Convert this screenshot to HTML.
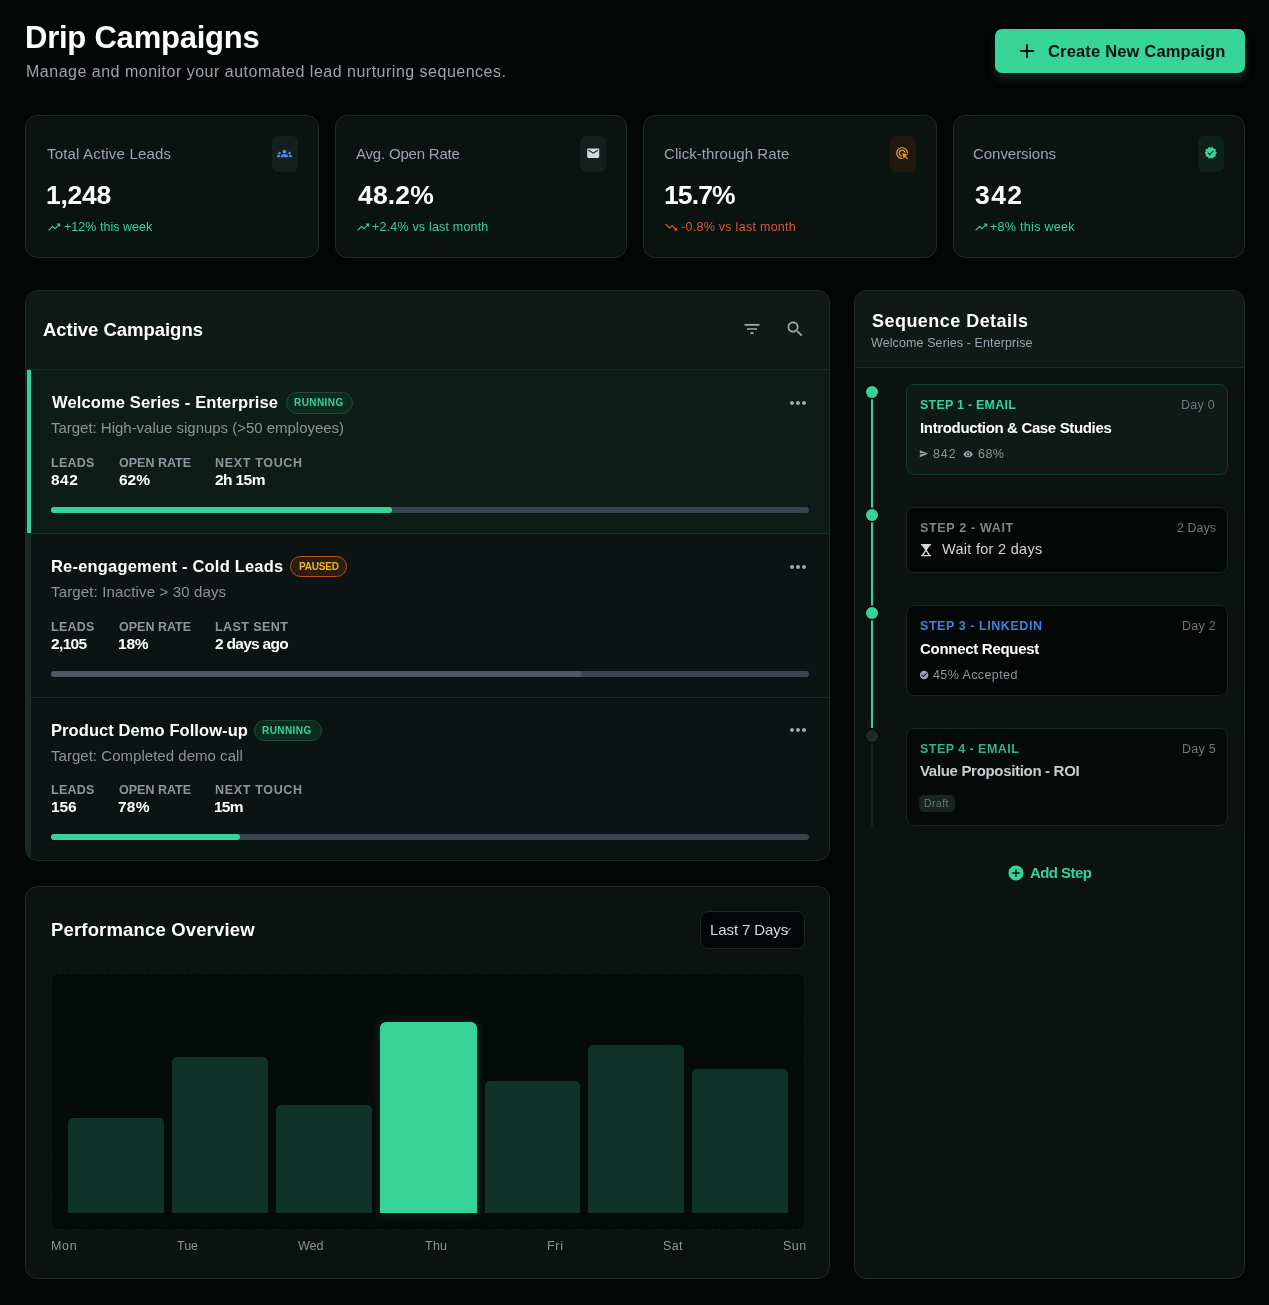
<!DOCTYPE html>
<html><head><meta charset="utf-8"><title>Drip Campaigns</title>
<style>
html,body{margin:0;padding:0;}
body{width:1269px;height:1305px;background:#020605;position:relative;overflow:hidden;font-family:"Liberation Sans",sans-serif;}
.t{position:absolute;white-space:nowrap;font-family:"Liberation Sans",sans-serif;will-change:transform;}
.b{position:absolute;box-sizing:border-box;}
svg{position:absolute;overflow:visible;}
</style></head><body>
<!-- button -->
<div class="b" style="left:995px;top:29px;width:250px;height:44px;background:#37d49a;border-radius:7px;box-shadow:0 6px 9px rgba(45,100,80,0.32);"></div>
<svg style="left:1019px;top:43px" width="16" height="16" viewBox="0 0 16 16"><path d="M8 1.2V14.8M1.2 8H14.8" stroke="#04100b" stroke-width="2" fill="none"/></svg>

<!-- stat cards -->
<div class="b" style="left:25px;top:115px;width:294px;height:143px;background:#0b1311;border:1px solid #1b2c25;border-radius:12px;"></div>
<div class="b" style="left:335px;top:115px;width:292px;height:143px;background:#0b1311;border:1px solid #1b2c25;border-radius:12px;"></div>
<div class="b" style="left:643px;top:115px;width:294px;height:143px;background:#0b1311;border:1px solid #1b2c25;border-radius:12px;"></div>
<div class="b" style="left:953px;top:115px;width:292px;height:143px;background:#0b1311;border:1px solid #1b2c25;border-radius:12px;"></div>
<!-- icon boxes -->
<div class="b" style="left:272px;top:136px;width:26px;height:36px;background:#14201d;border-radius:6px;"></div>
<div class="b" style="left:580px;top:136px;width:26px;height:36px;background:#14201d;border-radius:6px;"></div>
<div class="b" style="left:890px;top:136px;width:26px;height:36px;background:#21190f;border-radius:6px;"></div>
<div class="b" style="left:1198px;top:136px;width:26px;height:36px;background:#0f2219;border-radius:6px;"></div>
<svg style="left:276.7px;top:145.9px" width="15" height="15" viewBox="0 0 24 24"><path fill="#4a86e8" d="M12 12.75c1.63 0 3.07.39 4.24.9 1.08.48 1.76 1.56 1.76 2.73V18H6v-1.61c0-1.18.68-2.26 1.76-2.73 1.17-.52 2.61-.91 4.24-.91zM4 13c1.1 0 2-.9 2-2s-.9-2-2-2-2 .9-2 2 .9 2 2 2zm1.13 1.1c-.37-.06-.74-.1-1.13-.1-.99 0-1.93.21-2.78.58C.48 14.9 0 15.62 0 16.43V18h4.5v-1.61c0-.83.23-1.61.63-2.29zM20 13c1.1 0 2-.9 2-2s-.9-2-2-2-2 .9-2 2 .9 2 2 2zm4 3.43c0-.81-.48-1.530-1.22-1.85-.85-.37-1.79-.58-2.78-.58-.39 0-.76.04-1.13.1.4.68.63 1.46.63 2.29V18H24v-1.57zM12 6c1.66 0 3 1.34 3 3s-1.34 3-3 3-3-1.34-3-3 1.34-3 3-3z"/></svg>
<svg style="left:585.9px;top:145.7px" width="14.4" height="14.4" viewBox="0 0 24 24"><path fill="#d4d7db" d="M20 4H4c-1.1 0-1.99.9-1.99 2L2 18c0 1.1.9 2 2 2h16c1.1 0 2-.9 2-2V6c0-1.1-.9-2-2-2zm0 4l-8 5-8-5V6l8 5 8-5v2z"/></svg>
<svg style="left:895px;top:145.8px" width="14.2" height="14.2" viewBox="0 0 24 24"><path fill="#eea624" d="M11.71 17.99C8.53 17.84 6 15.22 6 12c0-3.31 2.69-6 6-6 3.22 0 5.840 2.53 5.99 5.71l-2.1-.63C15.48 9.31 13.89 8 12 8c-2.21 0-4 1.79-4 4 0 1.89 1.31 3.48 3.08 3.890l.63 2.1zM22 12c0 .3-.01.6-.04.9l-1.97-.59c.01-.1.01-.21.01-.31 0-4.42-3.58-8-8-8s-8 3.58-8 8 3.58 8 8 8c.1 0 .21 0 .31-.01l.59 1.97c-.3.03-.6.04-.9.04-5.52 0-10-4.48-10-10S6.48 2 12 2s10 4.48 10 10zm-3.77 4.26L22 15l-10-3 3 10 1.26-3.77 4.27 4.27 1.48-1.48-4.27-4.26z"/></svg>
<svg style="left:1204.1px;top:146.1px" width="13.5" height="13.5" viewBox="0 0 24 24"><path fill="#36d399" d="M23 11.99l-2.44-2.79.34-3.69-3.61-.82-1.89-3.2L12 2.96 8.6 1.5 6.71 4.69 3.1 5.5l.34 3.7L1 11.99l2.44 2.79-.34 3.7 3.61.82L8.6 22.5l3.4-1.47 3.4 1.46 1.89-3.19 3.61-.82-.34-3.69L23 11.99zm-12.91 4.72l-3.8-3.81 1.48-1.48 2.32 2.33 5.850-5.87 1.48 1.48-7.33 7.35z"/></svg>
<svg style="left:46.6px;top:219.9px" width="14.4" height="14.4" viewBox="0 0 24 24"><path fill="#34d399" d="M16 6l2.29 2.29-4.88 4.88-4-4L2 16.59 3.41 18l6-6 4 4 6.3-6.29L22 12V6z"/></svg>
<svg style="left:356px;top:219.9px" width="14.4" height="14.4" viewBox="0 0 24 24"><path fill="#34d399" d="M16 6l2.29 2.29-4.88 4.88-4-4L2 16.59 3.41 18l6-6 4 4 6.3-6.29L22 12V6z"/></svg>
<svg style="left:664.4px;top:219.9px" width="14.4" height="14.4" viewBox="0 0 24 24"><path fill="#d65a30" d="M16 18l2.29-2.29-4.88-4.88-4 4L2 7.41 3.41 6l6 6 4-4 6.3 6.29L22 12v6z"/></svg>
<svg style="left:973.7px;top:219.9px" width="14.4" height="14.4" viewBox="0 0 24 24"><path fill="#34d399" d="M16 6l2.29 2.29-4.88 4.88-4-4L2 16.59 3.41 18l6-6 4 4 6.3-6.29L22 12V6z"/></svg>


<!-- Active campaigns panel -->
<div class="b" style="left:25px;top:290px;width:805px;height:571px;background:#0b1412;border:1px solid #1b2c25;border-radius:12px;overflow:hidden;">
  <div class="b" style="left:0;top:0;width:803px;height:79px;background:#0f1a16;border-bottom:1px solid #1a2a24;"></div>
  <div class="b" style="left:0;top:79px;width:803px;height:164px;background:#0d1c17;border-bottom:1px solid #1a2a24;"></div>
  <div class="b" style="left:1px;top:79px;width:4px;height:163px;background:#34d399;"></div>
  <div class="b" style="left:0;top:243px;width:803px;height:164px;border-bottom:1px solid #1a2a24;"></div>
  <div class="b" style="left:0;top:243px;width:5px;height:163px;background:#1a2924;"></div>
  <div class="b" style="left:0;top:407px;width:5px;height:170px;background:#1a2924;"></div>
</div>
<!-- progress bars -->
<div class="b" style="left:51px;top:507px;width:758px;height:6px;background:#3a444e;border-radius:3px;"></div>
<div class="b" style="left:51px;top:507px;width:341px;height:6px;background:#34d399;border-radius:3px;"></div>
<div class="b" style="left:51px;top:671px;width:758px;height:6px;background:#3a444e;border-radius:3px;"></div>
<div class="b" style="left:51px;top:671px;width:531px;height:6px;background:#4e5860;border-radius:3px;"></div>
<div class="b" style="left:51px;top:834px;width:758px;height:6px;background:#3a444e;border-radius:3px;"></div>
<div class="b" style="left:51px;top:834px;width:189px;height:6px;background:#34d399;border-radius:3px;"></div>
<!-- badges -->
<div class="b" style="left:286px;top:392px;width:67px;height:22px;background:#0e2a1f;border:1px solid #1b4a37;border-radius:11px;"></div>
<div class="b" style="left:290px;top:556px;width:57px;height:21px;background:#2a1e10;border:1px solid #b9541f;border-radius:11px;"></div>
<div class="b" style="left:254px;top:720px;width:68px;height:21px;background:#0e2a1f;border:1px solid #1b4a37;border-radius:11px;"></div>
<svg style="left:741.5px;top:319px" width="20" height="20" viewBox="0 0 24 24"><path fill="#a0a5ab" d="M10 18h4v-2h-4v2zM3 6v2h18V6H3zm3 7h12v-2H6v2z"/></svg>
<svg style="left:784.9px;top:318.8px" width="20.3" height="20.3" viewBox="0 0 24 24"><path fill="#a0a5ab" d="M15.5 14h-.79l-.28-.27C15.41 12.59 16 11.11 16 9.5 16 5.91 13.09 3 9.5 3S3 5.910 3 9.5 5.91 16 9.5 16c1.61 0 3.09-.59 4.23-1.57l.27.28v.79l5 4.99L20.49 19l-4.99-5zm-6 0C7.01 14 5 11.99 5 9.5S7.01 5 9.5 5 14 7.01 14 9.5 11.99 14 9.5 14z"/></svg>
<svg style="left:786px;top:390.8px" width="24" height="24" viewBox="0 0 24 24"><path fill="#a0a5ab" d="M6 10c-1.1 0-2 .9-2 2s.9 2 2 2 2-.9 2-2-.9-2-2-2zm12 0c-1.1 0-2 .9-2 2s.9 2 2 2 2-.9 2-2-.9-2-2-2zm-6 0c-1.1 0-2 .9-2 2s.9 2 2 2 2-.9 2-2-.9-2-2-2z"/></svg>
<svg style="left:786px;top:554.5px" width="24" height="24" viewBox="0 0 24 24"><path fill="#a0a5ab" d="M6 10c-1.1 0-2 .9-2 2s.9 2 2 2 2-.9 2-2-.9-2-2-2zm12 0c-1.1 0-2 .9-2 2s.9 2 2 2 2-.9 2-2-.9-2-2-2zm-6 0c-1.1 0-2 .9-2 2s.9 2 2 2 2-.9 2-2-.9-2-2-2z"/></svg>
<svg style="left:786px;top:718px" width="24" height="24" viewBox="0 0 24 24"><path fill="#a0a5ab" d="M6 10c-1.1 0-2 .9-2 2s.9 2 2 2 2-.9 2-2-.9-2-2-2zm12 0c-1.1 0-2 .9-2 2s.9 2 2 2 2-.9 2-2-.9-2-2-2zm-6 0c-1.1 0-2 .9-2 2s.9 2 2 2 2-.9 2-2-.9-2-2-2z"/></svg>


<!-- Sequence panel -->
<div class="b" style="left:854px;top:290px;width:391px;height:989px;background:#0b1210;border:1px solid #1b2c25;border-radius:12px;overflow:hidden;">
  <div class="b" style="left:0;top:0;width:389px;height:77px;background:#0f1a16;border-bottom:1px solid #1a2a24;"></div>
</div>
<!-- timeline -->
<div class="b" style="left:871px;top:392px;width:2px;height:336px;background:#34d399;"></div>
<div class="b" style="left:871px;top:736px;width:2px;height:90px;background:#18251f;"></div>
<div class="b" style="left:866px;top:386px;width:12px;height:12px;background:#36d399;border-radius:50%;box-shadow:0 0 0 1.5px #070d0b;"></div>
<div class="b" style="left:866px;top:509px;width:12px;height:12px;background:#36d399;border-radius:50%;box-shadow:0 0 0 1.5px #070d0b;"></div>
<div class="b" style="left:866px;top:607px;width:12px;height:12px;background:#36d399;border-radius:50%;box-shadow:0 0 0 1.5px #070d0b;"></div>
<div class="b" style="left:866px;top:730px;width:12px;height:12px;background:#1c2b26;border-radius:50%;box-shadow:0 0 0 1.5px #070d0b;"></div>
<!-- step cards -->
<div class="b" style="left:906px;top:384px;width:322px;height:91px;background:#0f1a16;border:1px solid #123a2b;border-radius:8px;"></div>
<div class="b" style="left:906px;top:507px;width:322px;height:66px;background:#030706;border:1px solid #17261f;border-radius:8px;"></div>
<div class="b" style="left:906px;top:605px;width:322px;height:91px;background:#030706;border:1px solid #17261f;border-radius:8px;"></div>
<div class="b" style="left:906px;top:728px;width:322px;height:98px;background:#060b09;border:1px solid #16241e;border-radius:8px;"></div>
<div class="b" style="left:919px;top:795px;width:36px;height:17px;background:#18241f;border-radius:5px;"></div>
<svg style="left:919.1px;top:449px" width="9.5" height="9.5" viewBox="0 0 24 24"><path fill="#9ca3af" d="M2.01 21L23 12 2.01 3 2 10l15 2-15 2z"/></svg>
<svg style="left:963.2px;top:449.1px" width="10.25" height="10.25" viewBox="0 0 24 24"><path fill="#9ca3af" d="M12 4.5C7 4.5 2.73 7.61 1 12c1.73 4.39 6 7.5 11 7.5s9.27-3.11 11-7.5c-1.73-4.39-6-7.5-11-7.5zM12 17c-2.76 0-5-2.24-5-5s2.24-5 5-5 5 2.24 5 5-2.24 5-5 5zm0-8c-1.66 0-3 1.34-3 3s1.34 3 3 3 3-1.34 3-3-1.34-3-3-3z"/></svg>
<svg style="left:921px;top:543.8px" width="10" height="12.3" viewBox="0 0 10 12.3"><path fill="#d1d5db" d="M0 0H10V1.4H9L5.9 6H4.1L1 1.4H0z M0 10.9H1L4.1 6.1H5.9L9 10.9H10V12.3H0z"/><path fill="#030706" d="M2.7 10.9L4.8 7.4H5.2L7.3 10.9z"/></svg>
<svg style="left:919px;top:669.6px" width="10.2" height="10.2" viewBox="0 0 24 24"><path fill="#9ca3af" d="M12 2C6.48 2 2 6.48 2 12s4.48 10 10 10 10-4.48 10-10S17.52 2 12 2zm-2 15l-5-5 1.41-1.41L10 14.17l7.59-7.59L19 8l-9 9z"/></svg>
<svg style="left:1007.4px;top:863.5px" width="18" height="18" viewBox="0 0 24 24"><path fill="#34d399" d="M12 2C6.48 2 2 6.48 2 12s4.48 10 10 10 10-4.48 10-10S17.52 2 12 2zm5 11h-4v4h-2v-4H7v-2h4V7h2v4h4v2z"/></svg>


<!-- Performance panel -->
<div class="b" style="left:25px;top:886px;width:805px;height:393px;background:#0b1311;border:1px solid #1b2c25;border-radius:12px;"></div>
<div class="b" style="left:700px;top:911px;width:105px;height:38px;background:#030606;border:1px solid #18271f;border-radius:8px;"></div>
<div class="b" style="left:51px;top:973px;width:754px;height:257px;background:#050b09;border:1px dashed #111c18;border-radius:8px;"></div>
<!-- bars -->
<div class="b" style="left:68px;top:1118px;width:96px;height:95px;background:#0f3328;border-radius:5px 5px 0 0;"></div>
<div class="b" style="left:172px;top:1057px;width:96px;height:156px;background:#0f3328;border-radius:5px 5px 0 0;"></div>
<div class="b" style="left:276px;top:1105px;width:96px;height:108px;background:#0f3328;border-radius:5px 5px 0 0;"></div>
<div class="b" style="left:380px;top:1022px;width:97px;height:191px;background:#36d399;border-radius:6px 6px 0 0;box-shadow:0 0 7px 4px rgba(90,190,150,0.09);"></div>
<div class="b" style="left:485px;top:1081px;width:95px;height:132px;background:#0f3328;border-radius:5px 5px 0 0;"></div>
<div class="b" style="left:588px;top:1045px;width:96px;height:168px;background:#0f3328;border-radius:5px 5px 0 0;"></div>
<div class="b" style="left:692px;top:1069px;width:96px;height:144px;background:#0f3328;border-radius:5px 5px 0 0;"></div>
<svg style="left:0;top:0" width="1269" height="1305"><path d="M785.8 933.4L790.7 928.1" stroke="#80868c" stroke-width="1.3" fill="none"/></svg>


<div class="t" style="left:24.78px;top:22.25px;font-size:31px;line-height:31px;font-weight:700;color:#ffffff;letter-spacing:-0.23px;">Drip Campaigns</div>
<div class="t" style="left:25.66px;top:63.7px;font-size:16px;line-height:16px;font-weight:400;color:#9ca3af;letter-spacing:0.5px;">Manage and monitor your automated lead nurturing sequences.</div>
<div class="t" style="left:1047.7px;top:43.08px;font-size:16.5px;line-height:16.5px;font-weight:700;color:#04100b;letter-spacing:0.17px;">Create New Campaign</div>
<div class="t" style="left:47.0px;top:145.85px;font-size:15px;line-height:15px;font-weight:400;color:#9ca3af;letter-spacing:0.18px;">Total Active Leads</div>
<div class="t" style="left:46.2px;top:182.28px;font-size:26.5px;line-height:26.5px;font-weight:700;color:#ffffff;letter-spacing:-0.25px;">1,248</div>
<div class="t" style="left:63.6px;top:220.88px;font-size:12.5px;line-height:12.5px;font-weight:400;color:#34d399;letter-spacing:0.03px;">+12% this week</div>
<div class="t" style="left:355.6px;top:145.85px;font-size:15px;line-height:15px;font-weight:400;color:#9ca3af;letter-spacing:-0.2px;">Avg. Open Rate</div>
<div class="t" style="left:357.5px;top:182.28px;font-size:26.5px;line-height:26.5px;font-weight:700;color:#ffffff;letter-spacing:0.15px;">48.2%</div>
<div class="t" style="left:371.5px;top:220.88px;font-size:12.5px;line-height:12.5px;font-weight:400;color:#34d399;letter-spacing:0.19px;">+2.4% vs last month</div>
<div class="t" style="left:664.3px;top:145.85px;font-size:15px;line-height:15px;font-weight:400;color:#9ca3af;letter-spacing:0.06px;">Click-through Rate</div>
<div class="t" style="left:664.2px;top:182.28px;font-size:26.5px;line-height:26.5px;font-weight:700;color:#ffffff;letter-spacing:-0.88px;">15.7%</div>
<div class="t" style="left:680.52px;top:220.88px;font-size:12.5px;line-height:12.5px;font-weight:400;color:#d65a30;letter-spacing:0.28px;">-0.8% vs last month</div>
<div class="t" style="left:972.7px;top:145.85px;font-size:15px;line-height:15px;font-weight:400;color:#9ca3af;letter-spacing:-0.04px;">Conversions</div>
<div class="t" style="left:974.5px;top:182.28px;font-size:26.5px;line-height:26.5px;font-weight:700;color:#ffffff;letter-spacing:1.4px;">342</div>
<div class="t" style="left:990.0px;top:220.88px;font-size:12.5px;line-height:12.5px;font-weight:400;color:#34d399;letter-spacing:0.3px;">+8% this week</div>
<div class="t" style="left:42.76px;top:320.57px;font-size:18.5px;line-height:18.5px;font-weight:700;color:#ffffff;letter-spacing:-0.03px;">Active Campaigns</div>
<div class="t" style="left:52.36px;top:394.48px;font-size:16.5px;line-height:16.5px;font-weight:700;color:#ffffff;letter-spacing:0.13px;">Welcome Series - Enterprise</div>
<div class="t" style="left:51.2px;top:420.45px;font-size:15px;line-height:15px;font-weight:400;color:#8d939b;letter-spacing:-0.02px;">Target: High-value signups (&gt;50 employees)</div>
<div class="t" style="left:51.3px;top:457.07px;font-size:12.5px;line-height:12.5px;font-weight:700;color:#8f959d;letter-spacing:0.25px;">LEADS</div>
<div class="t" style="left:51.44px;top:472.22px;font-size:15.5px;line-height:15.5px;font-weight:700;color:#ffffff;letter-spacing:0.5px;">842</div>
<div class="t" style="left:118.5px;top:457.07px;font-size:12.5px;line-height:12.5px;font-weight:700;color:#8f959d;letter-spacing:0.0px;">OPEN RATE</div>
<div class="t" style="left:118.62px;top:472.22px;font-size:15.5px;line-height:15.5px;font-weight:700;color:#ffffff;letter-spacing:0.0px;">62%</div>
<div class="t" style="left:215.2px;top:457.07px;font-size:12.5px;line-height:12.5px;font-weight:700;color:#8f959d;letter-spacing:0.67px;">NEXT TOUCH</div>
<div class="t" style="left:215.46px;top:472.22px;font-size:15.5px;line-height:15.5px;font-weight:700;color:#ffffff;letter-spacing:-0.6px;">2h 15m</div>
<div class="t" style="left:51.42px;top:558.18px;font-size:16.5px;line-height:16.5px;font-weight:700;color:#ffffff;letter-spacing:0.19px;">Re-engagement - Cold Leads</div>
<div class="t" style="left:51.2px;top:584.15px;font-size:15px;line-height:15px;font-weight:400;color:#8d939b;letter-spacing:0.15px;">Target: Inactive &gt; 30 days</div>
<div class="t" style="left:51.3px;top:620.77px;font-size:12.5px;line-height:12.5px;font-weight:700;color:#8f959d;letter-spacing:0.25px;">LEADS</div>
<div class="t" style="left:50.56px;top:635.92px;font-size:15.5px;line-height:15.5px;font-weight:700;color:#ffffff;letter-spacing:-0.65px;">2,105</div>
<div class="t" style="left:118.5px;top:620.77px;font-size:12.5px;line-height:12.5px;font-weight:700;color:#8f959d;letter-spacing:0.0px;">OPEN RATE</div>
<div class="t" style="left:117.7px;top:635.92px;font-size:15.5px;line-height:15.5px;font-weight:700;color:#ffffff;letter-spacing:-0.2px;">18%</div>
<div class="t" style="left:215.2px;top:620.77px;font-size:12.5px;line-height:12.5px;font-weight:700;color:#8f959d;letter-spacing:0.44px;">LAST SENT</div>
<div class="t" style="left:215.46px;top:635.92px;font-size:15.5px;line-height:15.5px;font-weight:700;color:#ffffff;letter-spacing:-0.72px;">2 days ago</div>
<div class="t" style="left:51.42px;top:721.68px;font-size:16.5px;line-height:16.5px;font-weight:700;color:#ffffff;letter-spacing:0.08px;">Product Demo Follow-up</div>
<div class="t" style="left:51.2px;top:747.65px;font-size:15px;line-height:15px;font-weight:400;color:#8d939b;letter-spacing:0.03px;">Target: Completed demo call</div>
<div class="t" style="left:51.3px;top:784.27px;font-size:12.5px;line-height:12.5px;font-weight:700;color:#8f959d;letter-spacing:0.25px;">LEADS</div>
<div class="t" style="left:50.5px;top:799.42px;font-size:15.5px;line-height:15.5px;font-weight:700;color:#ffffff;letter-spacing:-0.1px;">156</div>
<div class="t" style="left:118.5px;top:784.27px;font-size:12.5px;line-height:12.5px;font-weight:700;color:#8f959d;letter-spacing:0.0px;">OPEN RATE</div>
<div class="t" style="left:117.7px;top:799.42px;font-size:15.5px;line-height:15.5px;font-weight:700;color:#ffffff;letter-spacing:0.2px;">78%</div>
<div class="t" style="left:215.2px;top:784.27px;font-size:12.5px;line-height:12.5px;font-weight:700;color:#8f959d;letter-spacing:0.67px;">NEXT TOUCH</div>
<div class="t" style="left:214.4px;top:799.42px;font-size:15.5px;line-height:15.5px;font-weight:700;color:#ffffff;letter-spacing:-0.75px;">15m</div>
<div class="t" style="left:294.2px;top:397.7px;font-size:10px;line-height:10px;font-weight:700;color:#34d399;letter-spacing:0.43px;">RUNNING</div>
<div class="t" style="left:298.6px;top:561.7px;font-size:10px;line-height:10px;font-weight:700;color:#f2b320;letter-spacing:-0.2px;">PAUSED</div>
<div class="t" style="left:262.4px;top:725.7px;font-size:10px;line-height:10px;font-weight:700;color:#34d399;letter-spacing:0.43px;">RUNNING</div>
<div class="t" style="left:871.86px;top:312.3px;font-size:18px;line-height:18px;font-weight:700;color:#ffffff;letter-spacing:0.46px;">Sequence Details</div>
<div class="t" style="left:870.86px;top:337.38px;font-size:12.5px;line-height:12.5px;font-weight:400;color:#9ca3af;letter-spacing:0.1px;">Welcome Series - Enterprise</div>
<div class="t" style="left:919.5px;top:399.07px;font-size:12.5px;line-height:12.5px;font-weight:700;color:#34d399;letter-spacing:0.23px;">STEP 1 - EMAIL</div>
<div class="t" style="left:1180.7px;top:398.88px;font-size:12.5px;line-height:12.5px;font-weight:400;color:#70767e;letter-spacing:0.25px;">Day 0</div>
<div class="t" style="left:919.5px;top:420.05px;font-size:15px;line-height:15px;font-weight:700;color:#ffffff;letter-spacing:-0.35px;">Introduction &amp; Case Studies</div>
<div class="t" style="left:933.14px;top:447.68px;font-size:12.5px;line-height:12.5px;font-weight:400;color:#8d939b;letter-spacing:0.9px;">842</div>
<div class="t" style="left:977.78px;top:447.68px;font-size:12.5px;line-height:12.5px;font-weight:400;color:#8d939b;letter-spacing:0.45px;">68%</div>
<div class="t" style="left:919.5px;top:521.58px;font-size:12.5px;line-height:12.5px;font-weight:700;color:#7d848b;letter-spacing:0.67px;">STEP 2 - WAIT</div>
<div class="t" style="left:1176.64px;top:521.58px;font-size:12.5px;line-height:12.5px;font-weight:400;color:#70767e;letter-spacing:0.0px;">2 Days</div>
<div class="t" style="left:942.04px;top:542.47px;font-size:14.5px;line-height:14.5px;font-weight:400;color:#d1d5db;letter-spacing:0.29px;">Wait for 2 days</div>
<div class="t" style="left:919.5px;top:619.98px;font-size:12.5px;line-height:12.5px;font-weight:700;color:#3f83e0;letter-spacing:0.56px;">STEP 3 - LINKEDIN</div>
<div class="t" style="left:1181.8px;top:619.98px;font-size:12.5px;line-height:12.5px;font-weight:400;color:#70767e;letter-spacing:0.25px;">Day 2</div>
<div class="t" style="left:919.5px;top:640.95px;font-size:15px;line-height:15px;font-weight:700;color:#ffffff;letter-spacing:-0.29px;">Connect Request</div>
<div class="t" style="left:932.72px;top:668.88px;font-size:12.5px;line-height:12.5px;font-weight:400;color:#8d939b;letter-spacing:0.41px;">45% Accepted</div>
<div class="t" style="left:919.5px;top:742.67px;font-size:12.5px;line-height:12.5px;font-weight:700;color:#2fb585;letter-spacing:0.46px;">STEP 4 - EMAIL</div>
<div class="t" style="left:1181.8px;top:742.67px;font-size:12.5px;line-height:12.5px;font-weight:400;color:#6e757c;letter-spacing:0.25px;">Day 5</div>
<div class="t" style="left:919.98px;top:763.35px;font-size:15px;line-height:15px;font-weight:700;color:#c9cdd2;letter-spacing:-0.32px;">Value Proposition - ROI</div>
<div class="t" style="left:923.84px;top:798.28px;font-size:10.5px;line-height:10.5px;font-weight:400;color:#6e757c;letter-spacing:0.42px;">Draft</div>
<div class="t" style="left:1029.6px;top:865.15px;font-size:15px;line-height:15px;font-weight:700;color:#34d399;letter-spacing:-0.57px;">Add Step</div>
<div class="t" style="left:51.0px;top:921.07px;font-size:18.5px;line-height:18.5px;font-weight:700;color:#ffffff;letter-spacing:0.16px;">Performance Overview</div>
<div class="t" style="left:709.7px;top:922.35px;font-size:15px;line-height:15px;font-weight:400;color:#d7dade;letter-spacing:-0.1px;">Last 7 Days</div>
<div class="t" style="left:51.06px;top:1240.47px;font-size:12.5px;line-height:12.5px;font-weight:400;color:#8d939b;letter-spacing:0.7px;">Mon</div>
<div class="t" style="left:176.82px;top:1240.47px;font-size:12.5px;line-height:12.5px;font-weight:400;color:#8d939b;letter-spacing:0.0px;">Tue</div>
<div class="t" style="left:298.36px;top:1240.47px;font-size:12.5px;line-height:12.5px;font-weight:400;color:#8d939b;letter-spacing:0.0px;">Wed</div>
<div class="t" style="left:424.52px;top:1240.47px;font-size:12.5px;line-height:12.5px;font-weight:400;color:#8d939b;letter-spacing:0.25px;">Thu</div>
<div class="t" style="left:546.76px;top:1240.47px;font-size:12.5px;line-height:12.5px;font-weight:400;color:#8d939b;letter-spacing:0.7px;">Fri</div>
<div class="t" style="left:662.8px;top:1240.47px;font-size:12.5px;line-height:12.5px;font-weight:400;color:#8d939b;letter-spacing:0.35px;">Sat</div>
<div class="t" style="left:783.1px;top:1240.47px;font-size:12.5px;line-height:12.5px;font-weight:400;color:#8d939b;letter-spacing:0.45px;">Sun</div>
</body></html>
